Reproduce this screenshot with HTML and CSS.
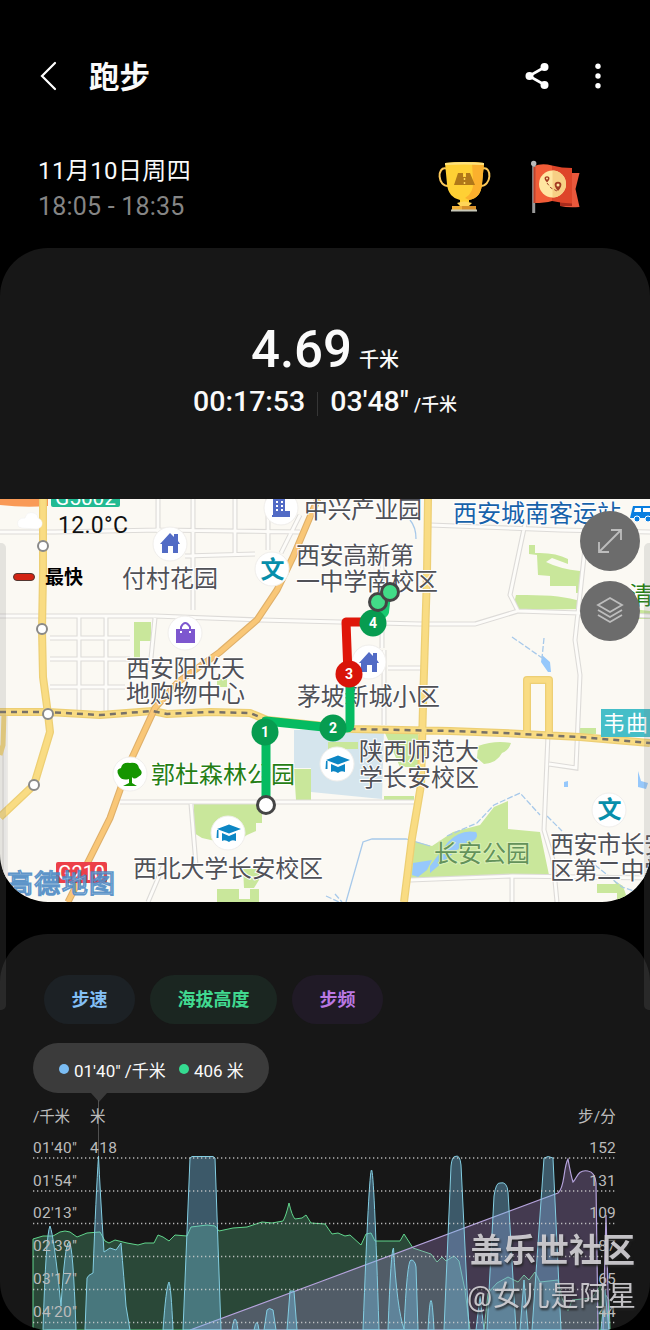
FILE: index.html
```html
<!DOCTYPE html>
<html lang="zh-CN">
<head>
    <meta charset="UTF-8">
    <meta name="viewport" content="width=device-width, initial-scale=1.0">
    <title>跑步</title>
    <link rel="stylesheet" href="styles.css">
</head>
<body>
    <header class="top-bar">
        <svg class="back" width="20" height="32" viewBox="0 0 20 32"><path d="M17 3 4 16 17 29"/></svg>
        <h1>跑步</h1>
        <svg class="share" width="26" height="28" viewBox="0 0 26 28"><path d="M20 5 4 14 20 23"/><circle cx="19.500" cy="5" r="4"/><circle cx="4.500" cy="14" r="4"/><circle cx="19.500" cy="23" r="4"/></svg>
        <svg class="more" width="8" height="28" viewBox="0 0 8 28"><circle cx="4" cy="4.200" r="2.700"/><circle cx="4" cy="14" r="2.700"/><circle cx="4" cy="23.800" r="2.700"/></svg>
    </header>

    <section class="date-row">
        <div class="date-text">
            <div class="date">11月10日周四</div>
            <div class="time">18:05 - 18:35</div>
        </div>
        <svg class="trophy" width="54" height="52" viewBox="0 0 54 52">
            <path d="M8 7.500C-1 5-1 26 11 25M45 7.500c9-2.500 9 18-3 17.500" fill="none" stroke="#fcc95a" stroke-width="2"/>
            <path d="M7 2Q26 0 46 2L44 23Q43 37 31 39V42H22V39Q10 36 9 23Z" fill="#ffd034"/>
            <path d="M34 1 46 2 44 23Q43 37 31 39L27 37Q36 32 35 20Z" fill="#fbb02d"/>
            <path d="M7 2Q26 0 46 2V4Q26 3 7 4Z" fill="#ffe27a"/>
            <path d="M20 12H25V16H28V12H32L37 24H16Z" fill="#b07819"/>
            <path d="M26.500 13v10" stroke="#ffd85a" stroke-width="1.500" stroke-dasharray="2 2"/>
            <path d="M19 42Q26 39 34 42L31 45H22Z" fill="#ffd558"/><path d="M14 45h24v4H14Z" fill="#f0b13b"/><path d="M24 45h14v4H24Z" fill="#d7912a"/><path d="M13 48.500h26v2H13Z" fill="#c8c8b8"/>
        </svg>
        <svg class="flag" width="50" height="54" viewBox="0 0 50 54">
            <path d="M40 13H49.500L45.500 29 49.500 47Q38 48 30 46Z" fill="#e9583c"/>
            <path d="M30 41 42 41V46L30 46Z" fill="#a92b1c"/>
            <path d="M4 6Q12 3 22 5.500V41Q15 43 4 43Z" fill="#f15c37"/>
            <path d="M22 5.500Q32 8 42 8V43.500Q32 43 22 41Z" fill="#de4529"/>
            <circle cx="22.500" cy="24" r="13.500" fill="#ffe6a1"/><path d="M22.500 10.500a13.500 13.500 0 0 1 0 27Z" fill="#f7cf85"/>
            <path d="M17 23 21 28 27 31" stroke="#a14229" fill="none" stroke-dasharray="3 2"/>
            <path d="M17 22.500Q13.500 18.500 15 17Q17 15.500 19 17Q20.500 19 17 22.500Z M28 31Q23.500 26 25 23Q28 20.500 31 23Q32.500 26 28 31Z" fill="#a33a22"/>
            <circle cx="17" cy="18.500" r="1" fill="#ffe6a1"/><circle cx="28" cy="25" r="1.500" fill="#ffe6a1"/>
            <path d="M3.700 3V53" stroke="#999" stroke-width="3"/><path d="M4.500 7V43" stroke="#c44128" stroke-width="2"/><circle cx="3.700" cy="3.500" r="2.700" fill="#bbb"/>
        </svg>
    </section>

    <section class="summary">
        <div class="distance"><b>4.69</b><span>千米</span></div>
        <div class="stats"><span class="duration">00:17:53</span><i></i><span class="pace">03'48"</span><small>/千米</small></div>
    </section>

    <section class="map">
        <svg class="map-canvas" width="650" height="403" viewBox="0 499 650 403">
            <defs>
                <g id="cap"><path d="M-11-4 1-8.500 13-4 1 0.500Z M-6 0 1 3 8 0V8Q4 6 1 9Q-3 6-6 8Z M-11-3h1.500v8h-2Z"/></g>
                <g id="house"><path d="M-10 1 0-10 4-6V-9H8V-2L10 1H8V10H3V3H-2V10H-8V1Z"/></g>
                <path id="streets" d="M0 532H55L160 530 300 532M158 499V532M193 499V610M235 499V554M268 499V550M281 553 300 515M185 556 255 554M0 616 155 616 260 620 420 624 475 624 518 611 580 613 650 616M79 616V713M106 616V713M50 638H130M50 659H130M50 687H125M155 618 150 668M525 524 510 595 518 611M430 525 560 530 650 532M585 548 575 640 580 675 576 768 549 764M548 735 544 830 553 860 557 902M120 802H414M191 804 196 865M165 862 148 902M384 650V725M382 557V648M388 668H425M410 880 512 876 650 878M512 876V902M5 716V902"/>
                <path id="roads" d="M43 499V573L42 630 43 677 48 714 50 732 34 785 0 817M0 712 48 712 100 715 153 711 167 714 210 712 250 713 267 720 353 729 450 731 503 733 580 737 650 743M428 499 427 573 423 705 421 785 412 838 404 902M527 733V680H549V735"/>
                <path id="highway" d="M68 902 90 858 110 818 130 762 155 708 178 682 220 652 257 620 277 590 293 557 313 510 318 499"/>
            </defs>
            <rect y="499" width="650" height="403" fill="#fbf9f3"/>

            <!-- parks and campus -->
            <g fill="#c9e79b">
                <path d="M134 622H151V641H140V658H134Z M217 679h10v8h-10Z"/>
                <path d="M529 545h6v8Q555 552 568 559V564L552 558 546 562Q560 569 580 571V593H576V586H550V576L538 575 537 555 529 554Z"/>
                <path d="M516 595Q560 594 580 601V609L518 610Q513 604 516 595Z M632 609l18 2v8h-18Z"/>
                <path d="M194 804H262V823H256V831L247 835 233 845 202 838 194 833Z M294 769H311V800H296Z"/>
                <path d="M478 746Q495 740 511 743Q509 750 502 753Q497 763 484 764L477 758Z M579 728h17v6h-17Z"/>
                <path d="M410 840 432 846 453 832 480 825 494 807 508 801V829L540 832 549 875 410 878Z"/>
                <path d="M597 884h19l-3-4 10 6 4 12-10 4V893H597Z"/>
                <path d="M217 889h22v10h11v-10h9v13h-42Z M243 868h16v12l-5 8h-10Z"/>
            </g>
            <path d="M294 730H384L382 799 311 792V768H294Z" fill="#d5e5ed"/>
            <g fill="#c9e79b"><path d="M328 742 358 742V749H328Z M385 733h33v34h-18Z M384 796h30v5h-30Z"/></g>
            <g fill="#96c8fb"><path d="M413 863 432 860 427 870 418 877 412 875Z M448 842Q460 829 476 832Q481 840 463 845L430 873V866Z"/><path d="M564 782l4-1v6h-4Z M638 771l3 10 7 2-2 6-8-2Z M542 655l8 7 1 10h-3l-7-10Z"/></g>
            <g fill="none" stroke="#a7c9ea" stroke-width="1.300">
                <path d="M410 520Q416 527 416 539M346 902 363 842 372 839 406 839 430 846"/>
                <path d="M512 637 545 660M544 638l-2 20M447 836 477 823 494 805 520 793 540 815M547 816 562 831M595 865 622 887 637 892M335 894l7 8M326 896l13 6" stroke-dasharray="6 2"/>
            </g>

            <!-- streets, grey casing with a white core -->
            <g fill="none" stroke="#dddbd8" stroke-width="5"><use href="#streets"/></g>
            <g fill="none" stroke="#fdfcf9" stroke-width="2.800"><use href="#streets"/></g>

            <!-- main roads -->
            <path d="M0 499H48V506Q25 508 0 505Z" fill="#f99a57"/>
            <path d="M4 714 3 745 0 755" fill="none" stroke="#f3d67c" stroke-width="5"/>
            <g fill="none" stroke="#edcf74" stroke-width="8" stroke-linejoin="round"><use href="#roads"/></g>
            <g fill="none" stroke="#f9dc83" stroke-width="5.500" stroke-linejoin="round"><use href="#roads"/></g>
            <g fill="none" stroke="#dfb06a" stroke-width="7"><use href="#highway"/></g>
            <g fill="none" stroke="#f9c777" stroke-width="4.800"><use href="#highway"/></g>
            <path d="M0 712 48 712 100 715 153 711 167 714 210 712 250 713 267 720 353 729 450 731 503 733 580 737 650 743" fill="none" stroke="#777168" stroke-width="2.500" stroke-dasharray="6 5"/>
            <g class="station"><circle cx="43" cy="546" r="5"/><circle cx="42" cy="629" r="5"/><circle cx="48" cy="714" r="5"/><circle cx="34" cy="785" r="5"/></g>

            <!-- place icons -->
            <g class="poi-bg"><circle cx="170" cy="544" r="17"/><circle cx="185" cy="633" r="17"/><circle cx="272" cy="569" r="17"/><circle cx="281" cy="508" r="17"/><circle cx="369" cy="662" r="17"/><circle cx="337" cy="764" r="17"/><circle cx="228" cy="833" r="17"/><circle cx="130" cy="774" r="17"/><circle cx="609" cy="810" r="17"/></g>
            <g fill="#526bc5">
                <use href="#house" x="170" y="543"/><use href="#house" x="369" y="662"/>
                <path d="M273 499h12v12h5v6h-18v-2h1Z"/>
            </g>
            <path d="M276 502h2m3 0h2m-7 4h2m3 0h2m-7 4h2m3 0h2" stroke="#fff" stroke-width="2"/>
            <path d="M176 629h19v14H176Z" fill="#7d57cf"/><path d="M181 632V627Q185 619 190 627V632" fill="none" stroke="#7d57cf" stroke-width="2"/><path d="M180 632h2m7 0h2" stroke="#fff" stroke-width="2"/>
            <g fill="#0c86c4"><use href="#cap" x="337" y="764"/><use href="#cap" x="228" y="833"/></g>
            <path d="M119 776Q115 769 121 768Q122 762 130 763Q138 762 139 768Q145 774 138 777Q134 780 132 777V783L137 786H123L129 783V779Q122 781 119 776Z" fill="#159500"/>
            <g class="school"><text x="260.500" y="578">文</text><text x="597.500" y="818">文</text></g>

            <g class="label">
                <text x="304" y="518" textLength="118">中兴产业园</text>
                <text x="296" y="564" textLength="118">西安高新第</text>
                <text x="296" y="590" textLength="142">一中学南校区</text>
                <text x="122" y="587" textLength="96">付村花园</text>
                <text x="126" y="677" textLength="119">西安阳光天</text>
                <text x="126" y="702" textLength="119">地购物中心</text>
                <text x="297" y="705" textLength="143">茅坡新城小区</text>
                <text x="359" y="760" textLength="120">陕西师范大</text>
                <text x="359" y="786" textLength="120">学长安校区</text>
                <text x="133" y="877" textLength="190">西北大学长安校区</text>
                <text x="550" y="853" textLength="118">西安市长安</text>
                <text x="550" y="879" textLength="118">区第二中学</text>
                <text x="151" y="783" textLength="144" fill="#267e14">郭杜森林公园</text>
                <text class="park" x="434" y="862" textLength="96">长安公园</text>
                <text x="453" y="522" textLength="168" fill="#1762aa">西安城南客运站</text>
                <text x="629" y="604" fill="#267e14">清</text>
            </g>
            <path d="M633 506H650V518H630Z" fill="#087ee0"/><path d="M635 508h6v4h-7Zm8 0h7v4h-7Z" fill="#fff"/><circle cx="637" cy="519" r="3" fill="#087ee0" stroke="#fff"/><circle cx="648" cy="519" r="3" fill="#087ee0" stroke="#fff"/>

            <path d="M51 499h69v6q0 2-2 2H53q-2 0-2-2Z" fill="#22ba92"/>
            <text class="road-no" x="55" y="505" textLength="61" lengthAdjust="spacingAndGlyphs">G5002</text>
            <rect x="56" y="862" width="51" height="21" rx="2" fill="#ec4048"/><text class="road-no" x="58" y="880" textLength="47" lengthAdjust="spacingAndGlyphs">G210</text>
            <path d="M601 709h49v28h-49Z" fill="#45bec8"/><text class="metro" x="603" y="731" textLength="45">韦曲</text>
            <text class="amap" x="7" y="893" textLength="108">高德地图</text>

            <!-- running track -->
            <g fill="none" stroke-width="9" stroke-linejoin="round">
                <path d="M266 805V721L333 728 347 728Q350 728 350 724V675" stroke="#05bb61"/>
                <path d="M348 674 346 622H372" stroke="#df1609"/>
                <path d="M373 623 384 612 386 594" stroke="#19ca70" stroke-width="10"/>
            </g>
            <g class="marker"><circle cx="265" cy="732" r="13.500"/><circle cx="333" cy="728" r="13.500"/><circle class="fast" cx="349" cy="674" r="13.500"/><circle cx="373" cy="623" r="13.500"/></g>
            <g class="marker-no"><text x="265" y="737">1</text><text x="333" y="733">2</text><text x="349" y="679">3</text><text x="373" y="628">4</text></g>
            <g stroke="#454545" stroke-width="3" fill="#42dc87"><circle cx="378" cy="602" r="8.500"/><circle cx="390" cy="592" r="8.500"/><circle cx="266" cy="805" r="8.500" fill="#fff"/></g>

            <path d="M22 528Q16 527 18 521Q21 517 25 518Q27 511 34 513Q38 514 38 518Q43 520 42 525Q41 528 37 529Z" fill="#fff" stroke="#eee" stroke-width=".5"/>
            <text class="temp" x="58" y="533" textLength="70">12.0°C</text>
            <rect x="13.500" y="573.500" width="21" height="7" rx="3.500" fill="#d32413" stroke="#523630"/>
            <text class="fastest" x="45" y="584" textLength="38">最快</text>
        </svg>
        <div class="map-buttons">
            <button><svg width="28" height="28" viewBox="0 0 28 28"><path d="M3 25 25 3M3 15v10h10M15 3h10v10"/></svg></button>
            <button><svg width="30" height="30" viewBox="0 0 30 30"><path d="M15 2 27 9 15 16 3 9ZM3 14 15 21 27 14M3 19 15 26 27 19"/></svg></button>
        </div>
    </section>

    <section class="chart-card">
        <div class="chips">
            <span class="chip pace-chip">步速</span>
            <span class="chip height-chip">海拔高度</span>
            <span class="chip cadence-chip">步频</span>
        </div>
        <div class="tooltip"><i class="dot blue"></i><span>01'40" /千米</span><i class="dot green"></i><span>406 米</span></div>
        <svg class="chart" width="650" height="237" viewBox="0 1093 650 237">
            <path d="M91 1093h16l-8 9Z" fill="#3b3b3b"/>
            <path d="M98.500 1100V1157" stroke="#505050"/>
            <!-- altitude -->
            <path class="area-green" d="M33 1330V1239L43 1236 53 1236 60 1232 65 1231 70 1232 77 1237 87 1233 100 1232 105 1241 109 1243 115 1240 127 1243 138 1245 145 1243 154 1243 158 1235 163 1237 169 1241 175 1235 187 1236 191 1227 207 1225 215 1226 219 1231 233 1228 247 1227 262 1222 272 1223 283 1221Q286 1216 289 1203Q292 1216 295 1219L302 1218 306 1215 311 1223 325 1224 332 1234 338 1233 345 1236 350 1235 361 1245 366 1234 371 1233 375 1241 400 1241 404 1234 413 1248 431 1254 437 1262 442 1257 446 1261 454 1256 459 1261 465 1290 470 1330H484L488 1293 497 1283 508 1277 518 1282 524 1275 529 1280 535 1272 540 1282 558 1280 562 1298 568 1311 572 1300 592 1298 600 1286 609 1300 610 1330Z"/>
            <!-- cadence -->
            <path class="area-purple" d="M190 1330 325 1280 558 1193Q562 1190 564 1176T568 1159Q571 1176 573 1182C577 1179 577 1169 588 1171Q595 1172 596 1183L598 1330ZM603 1330 606 1215 609 1330Z"/>
            <!-- pace -->
            <path class="area-blue" d="M43 1330Q46 1233 50 1226Q54 1236 61 1306Q65 1242 69 1242T76 1330ZM85 1330 87 1278Q88 1275 93 1273Q96 1194 98.500 1156Q100 1190 104 1252L110 1248 116 1250 121 1243Q124 1279 126 1306L130 1330ZM163 1330Q166 1287 169 1282Q171 1286 173 1330ZM183 1330 190 1158 192 1156.500H213L215 1158 221 1330ZM232 1330Q235 1308 238 1330ZM254 1330Q257 1315 259 1330ZM264 1330 267 1310Q269 1307 273 1310L276 1330ZM287 1330 290 1291H294L297 1330Z"/>
            <path class="area-blue" d="M363 1330Q369 1171 371.500 1170T379 1330ZM388 1330Q391 1248 393.500 1248Q397 1309 404 1329Q407 1260 411 1260Q415 1260 416 1267L418 1330ZM428 1330Q431 1271 434 1330ZM444 1330 451 1166Q452 1156.500 455 1156.500Q460 1154 461 1165L469 1330ZM476 1330 480 1296 484 1330ZM487 1330 494 1196Q496 1182 500 1183Q507 1181 508 1192L516 1330ZM520 1330 524 1280 528 1330ZM532 1330 544 1158Q548 1155 553 1158L561 1330ZM601 1330 605 1290 609 1330Z"/>
            <g class="grid-lines"><path d="M33 1158H617M33 1191H617M33 1223.500H617M33 1256.500H617M33 1289.500H617M33 1322.500H617"/></g>
            <g class="axis">
                <text x="33" y="1122" textLength="37">/千米</text><text x="90" y="1122" textLength="15">米</text>
                <text x="33" y="1153" textLength="44">01'40"</text><text x="90" y="1153" textLength="27">418</text>
                <text x="33" y="1185.500" textLength="44">01'54"</text><text x="33" y="1218" textLength="44">02'13"</text>
                <text x="33" y="1251" textLength="44">02'39"</text><text x="33" y="1283.500" textLength="44">03'17"</text><text x="33" y="1316.500" textLength="44">04'20"</text>
            </g>
            <g class="axis right">
                <text x="616" y="1122">步/分</text><text x="616" y="1153">152</text><text x="616" y="1185.500">131</text><text x="616" y="1218">109</text><text x="616" y="1251">87</text><text x="616" y="1283.500">65</text><text x="616" y="1316.500">44</text>
            </g>
            <g class="watermark">
                <text class="community" x="470" y="1262" textLength="165">盖乐世社区</text>
                <text class="author" x="467" y="1306" textLength="169">@女儿是阿星</text>
            </g>
        </svg>
    </section>
    <div class="edge left"></div>
    <div class="edge right-edge"></div>
</body>
</html>
```
FILE: styles.css
```css
* {
    box-sizing: border-box;
}
body {
    margin: 0;
    width: 650px;
    height: 1330px;
    background: #000;
    color: #fafafa;
    font-family: Roboto, "Noto Sans CJK SC", sans-serif;
    position: relative;
    overflow: hidden;
}
.top-bar {
    height: 152px;
    display: flex;
    align-items: center;
    padding: 0 48px 0 38px;
}
.top-bar h1 {
    margin: 0 auto 0 31px;
    padding-top: 3px;
    font-size: 30.5px;
    font-weight: 700;
    line-height: 40px;
}
.back path {
    fill: none;
    stroke: #fff;
    stroke-width: 2.2;
    stroke-linecap: round;
}
.share {
    fill: #fff;
    stroke: none;
}
.share path {
    fill: none;
    stroke: #fff;
    stroke-width: 2.6;
}
.more {
    fill: #fff;
    margin-left: 43px;
}
.date-row {
    height: 96px;
    display: flex;
    align-items: flex-start;
    padding: 0 70px 0 38px;
}
.date-text {
    margin-right: auto;
    padding-top: 1px;
}
.date {
    font-size: 24px;
    line-height: 36px;
    letter-spacing: .4px;
}
.time {
    font-size: 25px;
    line-height: 36px;
    letter-spacing: .2px;
    color: #858585;
}
.trophy {
    margin-top: 9px;
}
.flag {
    margin: 8px 0 0 38px;
}
.summary {
    height: 251px;
    background: #171717;
    border-radius: 48px 48px 0 0;
    padding-top: 72px;
    text-align: center;
}
.distance {
    height: 61px;
    line-height: 60px;
}
.distance b {
    font-size: 51px;
    font-weight: 500;
}
.distance span {
    margin-left: 7px;
    font-size: 20px;
    font-weight: 500;
}
.stats {
    display: flex;
    justify-content: center;
    align-items: baseline;
    line-height: 42px;
    font-weight: 500;
}
.duration, .pace {
    font-size: 28.5px;
}
.stats i {
    width: 1px;
    height: 24px;
    margin: 0 12px;
    background: #363636;
    align-self: center;
}
.stats small {
    margin-left: 5px;
    font-size: 18px;
}
.map {
    position: relative;
    height: 403px;
    border-radius: 0 0 48px 48px;
    overflow: hidden;
}
.map-canvas, .chart {
    display: block;
}
.station {
    fill: #fff;
    stroke: #898989;
    stroke-width: 2;
}
.poi-bg {
    fill: #fff;
    stroke: #f0eeeb;
}
.label {
    font-family: "Noto Sans CJK SC", sans-serif;
    font-size: 24px;
    fill: #505157;
    stroke: #fff;
    stroke-width: 2;
    paint-order: stroke;
}
.park {
    fill: #63925a;
    stroke: #d9efb8;
}
.school {
    font-family: "Noto Sans CJK SC", sans-serif;
    font-size: 24px;
    font-weight: 700;
    fill: #078eaa;
}
.road-no {
    font-size: 20px;
    fill: #fff;
}
.metro {
    font-size: 22px;
    fill: #fff;
}
.amap {
    font-size: 26px;
    fill: #cfe2f4;
    fill-opacity: .6;
    stroke: #4585c2;
    stroke-width: 1.6;
    stroke-opacity: .85;
}
.marker {
    fill: #079c50;
}
.marker .fast {
    fill: #d91409;
}
.marker-no {
    fill: #fff;
    font-size: 14px;
    font-weight: 700;
    text-anchor: middle;
}
.temp {
    fill: #111;
    font-size: 23px;
}
.fastest {
    fill: #000;
    font-size: 19px;
    font-weight: 700;
}
.map-buttons {
    position: absolute;
    top: 12px;
    right: 10px;
    display: grid;
    gap: 10px;
}
.map-buttons button {
    width: 60px;
    height: 60px;
    padding: 0;
    border: 0;
    border-radius: 50%;
    background: #6c6c6c;
    display: grid;
    place-items: center;
}
.map-buttons path {
    fill: none;
    stroke: #bdbdbd;
    stroke-width: 1.8;
}
.chart-card {
    height: 396px;
    margin-top: 32px;
    padding-top: 41px;
    background: #171717;
    border-radius: 48px;
    overflow: hidden;
}
.chips {
    display: flex;
    gap: 15px;
    margin-left: 44px;
}
.chip {
    width: 91px;
    height: 49px;
    border-radius: 25px;
    font-size: 18px;
    font-weight: 700;
    line-height: 49px;
    text-align: center;
}
.pace-chip {
    color: #83bff5;
    background: #1c2125;
}
.height-chip {
    width: 127px;
    color: #41d990;
    background: #1b2621;
}
.cadence-chip {
    color: #ba78e3;
    background: #201a26;
}
.tooltip {
    display: flex;
    align-items: center;
    width: 236px;
    height: 50px;
    margin: 19px 0 0 33px;
    padding-left: 26px;
    padding-top: 2px;
    border-radius: 25px;
    background: #3b3b3b;
    font-size: 17px;
    white-space: nowrap;
}
.dot {
    width: 10px;
    height: 10px;
    margin-right: 5px;
    border-radius: 50%;
}
.blue {
    background: #7bbdf4;
}
.green {
    margin-left: 13px;
    background: #35db91;
}
.area-green {
    fill: rgba(86, 186, 133, .3);
    stroke: #61d58c;
    stroke-linejoin: round;
}
.area-purple {
    fill: rgba(173, 140, 213, .3);
    stroke: #b5a3dc;
    stroke-width: 1.2;
}
.area-blue {
    fill: rgba(118, 190, 230, .4);
    stroke: #83cde1;
}
.grid-lines {
    stroke: #d0d0d0;
    stroke-width: 1.3;
    stroke-dasharray: 1.3 2.7;
    opacity: .85;
}
.axis {
    font-size: 15.5px;
    fill: #bcbcbc;
}
.right {
    text-anchor: end;
    letter-spacing: .2px;
}
.watermark {
    fill: #d2d0d5;
    fill-opacity: .92;
    filter: drop-shadow(1px 2px 1px #222);
}
.community {
    font-size: 33px;
    font-weight: 700;
}
.author {
    font-size: 28px;
}
.edge {
    position: absolute;
    top: 543px;
    width: 6px;
    height: 467px;
    background: rgba(130, 130, 130, .18);
}
.left {
    left: 0;
    border-radius: 0 5px 5px 0;
}
.right-edge {
    right: 0;
    border-radius: 5px 0 0 5px;
}
```
